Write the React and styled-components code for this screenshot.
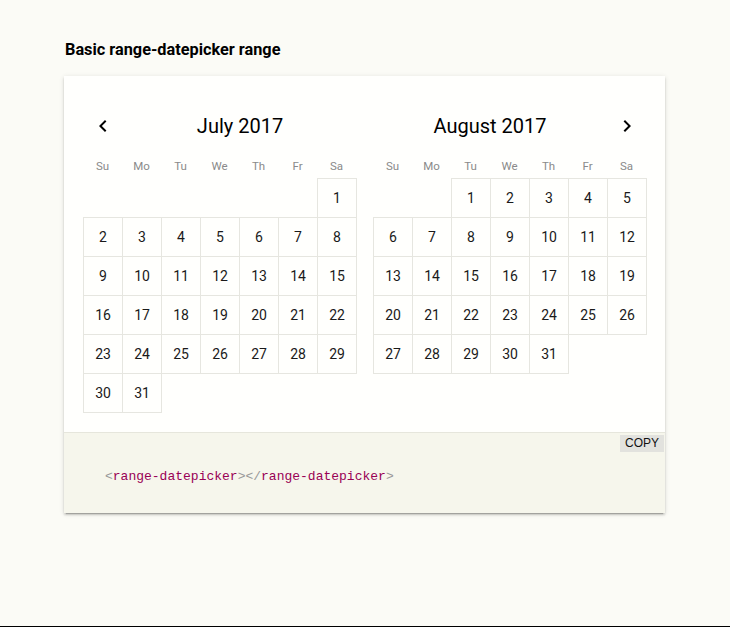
import React from "react";
import styled, { createGlobalStyle } from "styled-components";

const GlobalStyle = createGlobalStyle`
  html, body { margin: 0; padding: 0; background: #fbfbf6; }
  body { font-family: Roboto, "Noto Sans", sans-serif; color: #212121; }
  * { box-sizing: border-box; }
`;

const Page = styled.div`
  min-height: 627px;
  padding: 41px 0 0 64px;
  border-bottom: 1px solid #000;
`;

const Title = styled.h3`
  margin: 0 0 17px 1px;
  font-size: 16.3px;
  font-weight: 700;
  line-height: 18px;
  color: #000;
`;

const Card = styled.div`
  width: 601px;
  background: #fffffd;
  box-shadow: 0 2px 2px rgba(0, 0, 0, 0.14), 0 1px 5px rgba(0, 0, 0, 0.12),
    0 3px 1px -2px rgba(0, 0, 0, 0.2);
`;

const Demo = styled.div`
  display: flex;
  gap: 16px;
  padding: 30px 18px 19px 19px;
  min-height: 356px;
`;

const Month = styled.div`
  width: 274px;
`;

const Header = styled.div`
  display: flex;
  align-items: center;
  height: 40px;
`;

const NavButton = styled.div`
  width: 40px;
  height: 40px;
  display: flex;
  align-items: center;
  justify-content: center;
  color: #000;
`;

const MonthTitle = styled.div`
  flex: 1;
  text-align: center;
  font-size: 20px;
  line-height: 40px;
  color: #000;
`;

const WeekRow = styled.div`
  display: grid;
  grid-template-columns: repeat(7, 39px);
  margin-top: 8px;
  height: 24px;
  align-items: center;
`;

const WeekDay = styled.div`
  text-align: center;
  font-size: 11.5px;
  color: #8a8a8a;
`;

const Days = styled.div`
  display: grid;
  grid-template-columns: repeat(7, 39px);
  grid-auto-rows: 39px;
`;

const Day = styled.div`
  width: 40px;
  height: 40px;
  display: flex;
  align-items: center;
  justify-content: center;
  font-size: 14px;
  color: #1a1a1a;
  border: 1px solid ${(p) => (p.$empty ? "transparent" : "#e6e6e0")};
`;

const CodeArea = styled.div`
  position: relative;
  height: 81px;
  background: #f6f6ec;
  border-top: 1px solid #e6e6dc;
  display: flex;
  align-items: center;
  padding: 6px 0 0 41px;
`;

const CopyButton = styled.div`
  position: absolute;
  top: 2px;
  right: 1px;
  padding: 0 5px 0 5px;
  height: 17px;
  line-height: 17px;
  background: #e2e2de;
  font-size: 12px;
  color: #111;
  font-family: "Liberation Sans", Arial, sans-serif;
`;

const Code = styled.code`
  font-family: "Liberation Mono", "Courier New", monospace;
  font-size: 13px;
`;

const Punct = styled.span`
  color: #999;
`;

const Tag = styled.span`
  color: #905;
`;

const WEEKDAYS = ["Su", "Mo", "Tu", "We", "Th", "Fr", "Sa"];

const ChevronLeft = () => (
  <svg width="24" height="24" viewBox="0 0 24 24" fill="currentColor">
    <path d="M15.41 7.41L14 6l-6 6 6 6 1.41-1.41L10.83 12z" />
  </svg>
);

const ChevronRight = () => (
  <svg width="24" height="24" viewBox="0 0 24 24" fill="currentColor">
    <path d="M10 6L8.59 7.41 13.17 12l-4.58 4.59L10 18l6-6z" />
  </svg>
);

function Calendar({ title, offset, days, prev, next }) {
  const cells = [];
  for (let i = 0; i < offset; i++) cells.push(null);
  for (let d = 1; d <= days; d++) cells.push(d);
  return (
    <Month>
      <Header>
        {prev && (
          <NavButton>
            <ChevronLeft />
          </NavButton>
        )}
        <MonthTitle>{title}</MonthTitle>
        {next && (
          <NavButton>
            <ChevronRight />
          </NavButton>
        )}
      </Header>
      <WeekRow>
        {WEEKDAYS.map((w) => (
          <WeekDay key={w}>{w}</WeekDay>
        ))}
      </WeekRow>
      <Days>
        {cells.map((d, i) =>
          d === null ? <Day key={"e" + i} $empty /> : <Day key={d}>{d}</Day>
        )}
      </Days>
    </Month>
  );
}

export default function App() {
  return (
    <>
      <GlobalStyle />
      <Page>
        <Title>Basic range-datepicker range</Title>
        <Card>
          <Demo>
            <Calendar title="July 2017" offset={6} days={31} prev />
            <Calendar title="August 2017" offset={2} days={31} next />
          </Demo>
          <CodeArea>
            <CopyButton>COPY</CopyButton>
            <Code>
              <Punct>&lt;</Punct>
              <Tag>range-datepicker</Tag>
              <Punct>&gt;&lt;/</Punct>
              <Tag>range-datepicker</Tag>
              <Punct>&gt;</Punct>
            </Code>
          </CodeArea>
        </Card>
      </Page>
    </>
  );
}
